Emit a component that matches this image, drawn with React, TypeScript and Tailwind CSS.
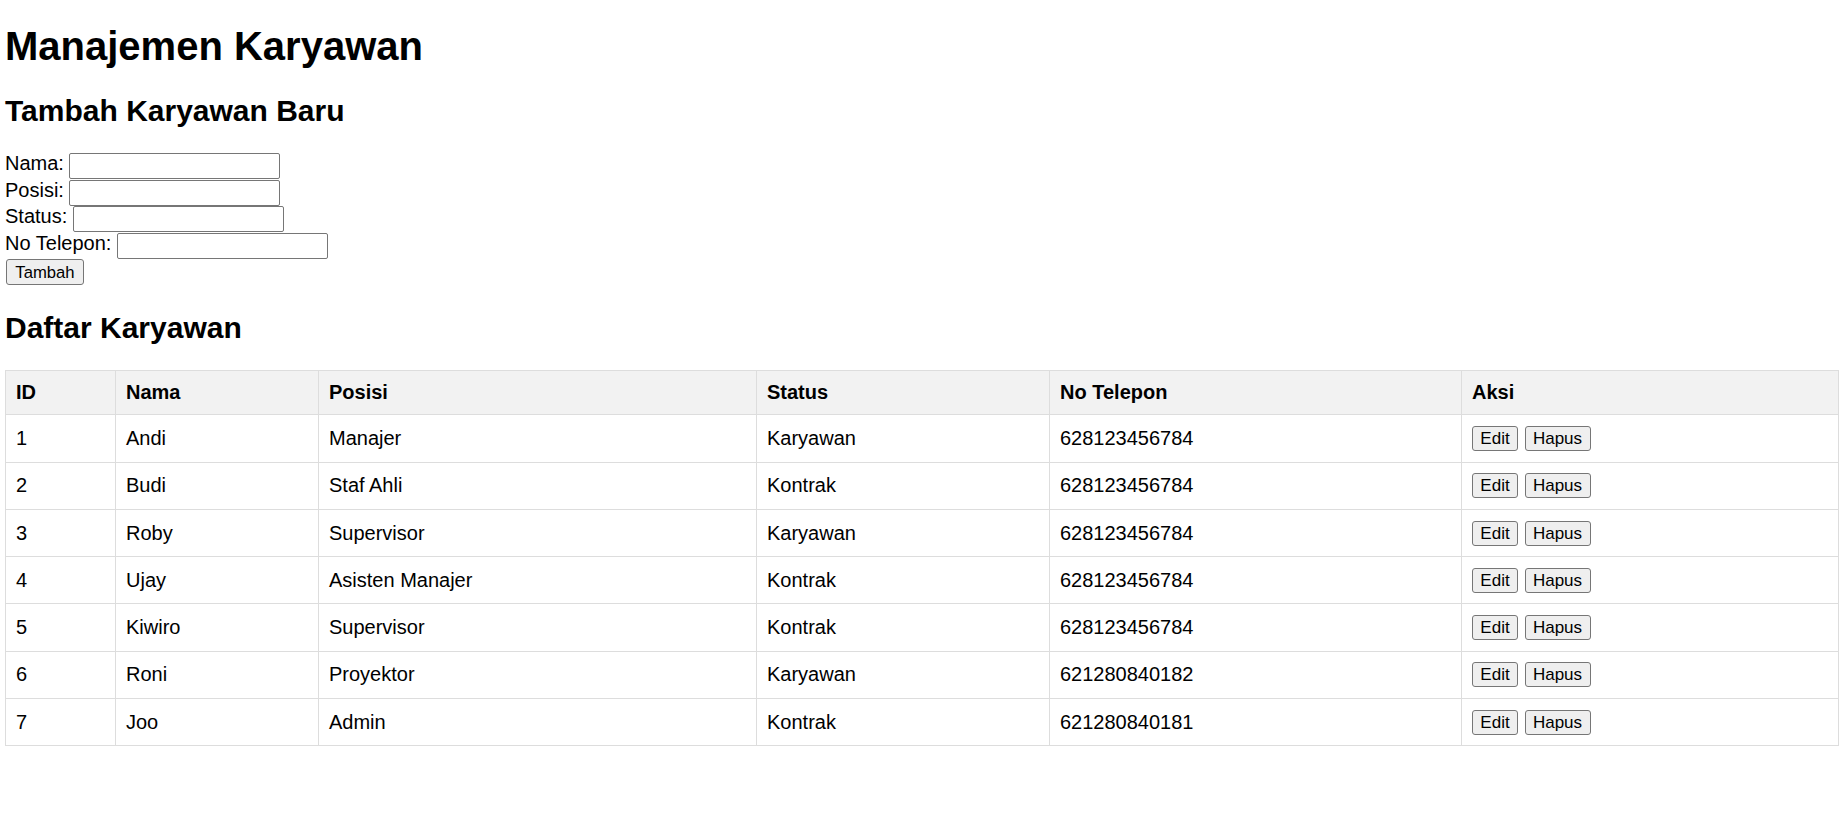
import React from "react";

const rows = [
  { id: 1, nama: "Andi", posisi: "Manajer", status: "Karyawan", tel: "628123456784" },
  { id: 2, nama: "Budi", posisi: "Staf Ahli", status: "Kontrak", tel: "628123456784" },
  { id: 3, nama: "Roby", posisi: "Supervisor", status: "Karyawan", tel: "628123456784" },
  { id: 4, nama: "Ujay", posisi: "Asisten Manajer", status: "Kontrak", tel: "628123456784" },
  { id: 5, nama: "Kiwiro", posisi: "Supervisor", status: "Kontrak", tel: "628123456784" },
  { id: 6, nama: "Roni", posisi: "Proyektor", status: "Karyawan", tel: "621280840182" },
  { id: 7, nama: "Joo", posisi: "Admin", status: "Kontrak", tel: "621280840181" },
];

function Field({ label }: { label: string }) {
  return (
    <div className="flex items-center h-[26.5px]">
      <span className="mb-[5px] leading-[23px]">{label}</span>
      <span className="w-[5.5px]" />
      <input
        type="text"
        className="h-[26px] w-[211px] border border-[#767676] rounded-[2px] bg-white px-[3px] text-[16.67px] outline-none"
      />
    </div>
  );
}

export default function App() {
  return (
    <div
      className="min-h-[820px] bg-white text-black pl-[5px] pr-[8px] pt-[23px] text-[20px]"
      style={{ fontFamily: '"Liberation Sans", Arial, sans-serif' }}
    >
      <h1 className="text-[40px] font-bold leading-[46px]">Manajemen Karyawan</h1>
      <h2 className="mt-[24px] text-[30px] font-bold leading-[35px]">Tambah Karyawan Baru</h2>
      <form className="mt-[25px]" onSubmit={(e) => e.preventDefault()}>
        <Field label="Nama:" />
        <Field label="Posisi:" />
        <Field label="Status:" />
        <Field label="No Telepon:" />
        <div className="flex items-center h-[26.5px]">
          <button className="h-[26px] w-[78px] border border-[#767676] rounded-[3px] bg-[#efefef] text-[16.67px] leading-[19px] ml-[1px]">
            Tambah
          </button>
        </div>
      </form>
      <h2 className="mt-[24px] text-[30px] font-bold leading-[35px]">Daftar Karyawan</h2>
      <table className="mt-[25.5px] w-[1833px] table-fixed border-collapse border border-[#dddddd]">
        <colgroup>
          <col className="w-[110px]" />
          <col className="w-[203px]" />
          <col className="w-[438px]" />
          <col className="w-[293px]" />
          <col className="w-[412px]" />
          <col className="w-[377px]" />
        </colgroup>
        <thead>
          <tr className="bg-[#f2f2f2]">
            {["ID", "Nama", "Posisi", "Status", "No Telepon", "Aksi"].map((h) => (
              <th
                key={h}
                className="h-[44.3px] border border-[#dddddd] px-[10px] text-left font-bold leading-[23px]"
              >
                {h}
              </th>
            ))}
          </tr>
        </thead>
        <tbody>
          {rows.map((r) => (
            <tr key={r.id}>
              <td className="h-[47.3px] border border-[#dddddd] px-[10px] leading-[23px]">{r.id}</td>
              <td className="border border-[#dddddd] px-[10px] leading-[23px]">{r.nama}</td>
              <td className="border border-[#dddddd] px-[10px] leading-[23px]">{r.posisi}</td>
              <td className="border border-[#dddddd] px-[10px] leading-[23px]">{r.status}</td>
              <td className="border border-[#dddddd] px-[10px] leading-[23px]">{r.tel}</td>
              <td className="border border-[#dddddd] px-[10px] leading-[23px]">
                <div className="flex items-center gap-[6.5px]">
                  <button className="h-[25px] w-[46px] border border-[#767676] rounded-[3px] bg-[#efefef] text-[17px] leading-[19px] text-black">
                    Edit
                  </button>
                  <button className="h-[25px] w-[66px] border border-[#767676] rounded-[3px] bg-[#efefef] text-[17px] leading-[19px] text-black">
                    Hapus
                  </button>
                </div>
              </td>
            </tr>
          ))}
        </tbody>
      </table>
    </div>
  );
}
